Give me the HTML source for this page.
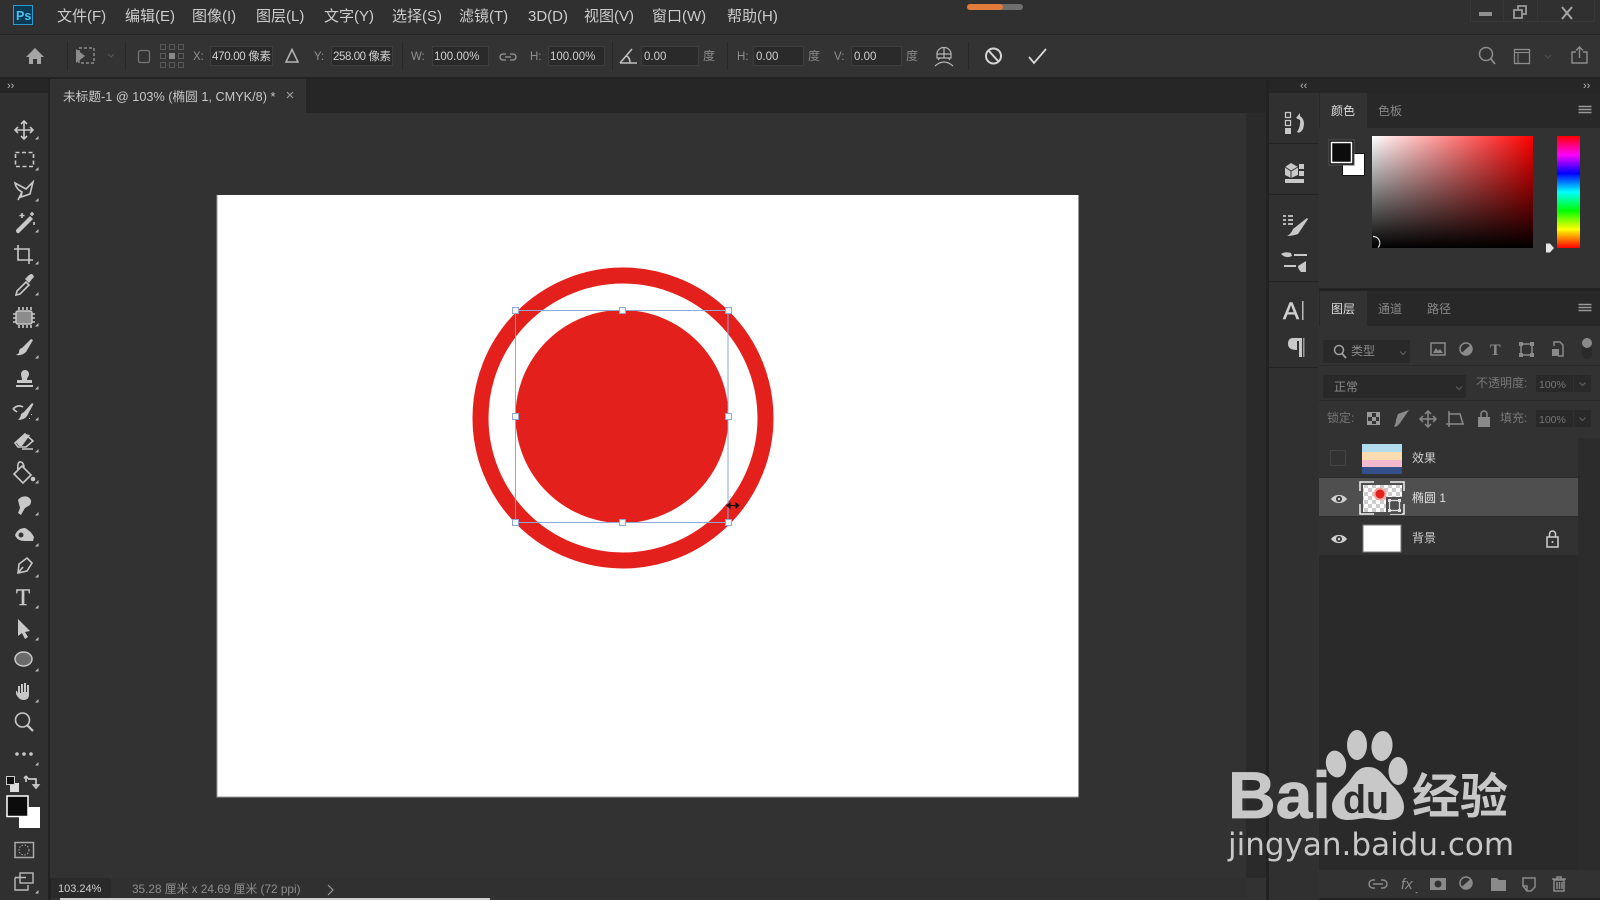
<!DOCTYPE html>
<html lang="zh"><head><meta charset="utf-8"><title>Photoshop</title>
<style>
html,body{margin:0;padding:0;width:1600px;height:900px;overflow:hidden;background:#333}
svg{display:block;filter:blur(.35px)}
text{font-family:"Liberation Sans","Noto Sans CJK SC",sans-serif}
.m{font-size:15px;fill:#cdcdcd}
.o{font-size:11.5px;fill:#8f8f8f}
.f{font-size:11.5px;fill:#d0d0d0}
.p{font-size:12px;fill:#cfcfcf}
.q{font-size:12px;fill:#8a8a8a}
.d{font-size:12px;fill:#777}
.ic{fill:none;stroke:#c8c8c8;stroke-width:1.6}
.fi{fill:#c8c8c8}
.dm{fill:#8a8a8a}
.dl{fill:none;stroke:#8a8a8a;stroke-width:1.5}
</style></head><body>
<svg width="1600" height="900" viewBox="0 0 1600 900" xmlns="http://www.w3.org/2000/svg">
<defs>
<linearGradient id="g1" x1="0" x2="1" y1="0" y2="0"><stop offset="0" stop-color="#fff"/><stop offset="1" stop-color="#f00"/></linearGradient>
<linearGradient id="g2" x1="0" x2="0" y1="0" y2="1"><stop offset="0" stop-color="#000" stop-opacity="0"/><stop offset="1" stop-color="#000"/></linearGradient>
<linearGradient id="hue" x1="0" x2="0" y1="0" y2="1"><stop offset="0" stop-color="#f00"/><stop offset=".167" stop-color="#f0f"/><stop offset=".333" stop-color="#00f"/><stop offset=".5" stop-color="#0ff"/><stop offset=".667" stop-color="#0f0"/><stop offset=".833" stop-color="#ff0"/><stop offset="1" stop-color="#f00"/></linearGradient>
<pattern id="chk" width="8" height="8" patternUnits="userSpaceOnUse"><rect width="8" height="8" fill="#fff"/><rect width="4" height="4" fill="#ccc"/><rect x="4" y="4" width="4" height="4" fill="#ccc"/></pattern>
<path id="tri" d="M0 3.5L3.5 0V3.5Z" fill="#bbb"/>
<g id="eye"><path d="M-8 0C-4-5.500 4-5.500 8 0C4 5.500-4 5.500-8 0Z" fill="#d0d0d0"/><circle r="3" fill="#333"/><circle r="1.300" fill="#d0d0d0"/></g>
<g id="chev"><path d="M-3-1.500L0 1.500L3-1.500" fill="none" stroke="#5c5c5c" stroke-width="1.200"/></g>
</defs>

<!-- base -->
<rect width="1600" height="900" fill="#323232"/>
<!-- title bar -->
<rect width="1600" height="34" fill="#303030"/>
<rect y="34" width="1600" height="1" fill="#262626"/>
<rect y="35" width="1600" height="43" fill="#333"/>
<rect y="77" width="1600" height="2" fill="#232323"/>
<!-- Ps logo -->
<rect x="13.500" y="5.500" width="19" height="19" fill="#0b3a55" stroke="#2a9bd4"/>
<text x="16" y="20" style="font-size:12.500px;font-weight:bold;fill:#4dc0f0">Ps</text>
<!-- menu -->
<text class="m" x="57" y="21">文件(F)</text>
<text class="m" x="125" y="21">编辑(E)</text>
<text class="m" x="192" y="21">图像(I)</text>
<text class="m" x="256" y="21">图层(L)</text>
<text class="m" x="324" y="21">文字(Y)</text>
<text class="m" x="392" y="21">选择(S)</text>
<text class="m" x="459" y="21">滤镜(T)</text>
<text class="m" x="528" y="21">3D(D)</text>
<text class="m" x="584" y="21">视图(V)</text>
<text class="m" x="652" y="21">窗口(W)</text>
<text class="m" x="727" y="21">帮助(H)</text>
<!-- progress -->
<rect x="967" y="4" width="56" height="6" rx="3" fill="#6f6f6f"/>
<rect x="967" y="4" width="36" height="6" rx="3" fill="#e07b39"/>
<!-- win controls -->
<path d="M1470.500 0V21.500H1594.500V0M1503.500 0V21M1537.500 0V21" fill="none" stroke="#383838"/>
<rect x="1479" y="12" width="13" height="4" fill="#8f8f8f"/>
<path d="M1514 10h8v8h-8zM1518 10V6h8v8h-4" fill="none" stroke="#9a9a9a" stroke-width="1.800"/>
<path d="M1562 7L1572 19M1572 7L1562 19" fill="none" stroke="#a5a5a5" stroke-width="2"/>

<!-- options bar -->
<path d="M35 48L26 57H29V64H33V59H37V64H41V57H44Z" fill="#a5a5a5"/>
<path d="M67.500 42V70M125.500 42V70M402.500 42V70M612.500 42V70M727.500 42V70M968.500 42V70" stroke="#282828" fill="none"/>
<rect x="79" y="48" width="15" height="15" fill="none" stroke="#8c8c8c" stroke-dasharray="3 2" stroke-width="1.500"/>
<path d="M76 49L85 56L76 63Z" fill="#8c8c8c"/>
<path d="M108 54l3 3l3-3" fill="none" stroke="#555" stroke-width="1.200"/>
<rect x="138.500" y="50.500" width="11" height="12" rx="2" fill="none" stroke="#777" stroke-width="1.300"/>
<g fill="none" stroke="#5a5a5a"><rect x="160.500" y="44.500" width="5" height="5"/><rect x="169.500" y="44.500" width="5" height="5"/><rect x="178.500" y="44.500" width="5" height="5"/><rect x="160.500" y="53.500" width="5" height="5"/><rect x="178.500" y="53.500" width="5" height="5"/><rect x="160.500" y="62.500" width="5" height="5"/><rect x="169.500" y="62.500" width="5" height="5"/><rect x="178.500" y="62.500" width="5" height="5"/></g>
<rect x="169" y="53" width="6" height="6" fill="#8a8a8a"/>
<g fill="#2a2a2a" stroke="#3f3f3f">
<rect x="210.500" y="46.500" width="62" height="19"/>
<rect x="331.500" y="46.500" width="61" height="19"/>
<rect x="432.500" y="46.500" width="56" height="19"/>
<rect x="548.500" y="46.500" width="56" height="19"/>
<rect x="641.500" y="46.500" width="57" height="19"/>
<rect x="753.500" y="46.500" width="50" height="19"/>
<rect x="851.500" y="46.500" width="50" height="19"/>
</g>
<text class="o" x="193" y="60">X:</text><text class="f" x="212" y="60" textLength="59">470.00 像素</text>
<path d="M292 49.500L298 62H286Z" fill="none" stroke="#b5b5b5" stroke-width="1.500"/>
<text class="o" x="314" y="60">Y:</text><text class="f" x="333" y="60" textLength="58">258.00 像素</text>
<text class="o" x="411" y="60">W:</text><text class="f" x="434" y="60">100.00%</text>
<path d="M506 54h-3a3 3 0 0 0 0 6h3M510 54h3a3 3 0 0 1 0 6h-3M505 57h6" fill="none" stroke="#999" stroke-width="1.300"/>
<text class="o" x="530" y="60">H:</text><text class="f" x="550" y="60">100.00%</text>
<path d="M620 63H637M620 63L632 49M630 63Q630 57 626 56" fill="none" stroke="#c0c0c0" stroke-width="1.600"/>
<text class="f" x="644" y="60">0.00</text><text class="q" x="703" y="60">度</text>
<text class="o" x="737" y="60">H:</text><text class="f" x="756" y="60">0.00</text><text class="q" x="808" y="60">度</text>
<text class="o" x="834" y="60">V:</text><text class="f" x="854" y="60">0.00</text><text class="q" x="906" y="60">度</text>
<path d="M937 54A7 6.500 0 0 1 951 54V58H937ZM937 54H951M944 47.500V58M940 58L938 60M948 58L950 60M935 66Q944 58 953 66" fill="none" stroke="#b5b5b5" stroke-width="1.200"/>
<circle cx="993.500" cy="56" r="7.500" fill="none" stroke="#d5d5d5" stroke-width="2"/>
<path d="M988.500 50.500L998.500 61.500" stroke="#d5d5d5" stroke-width="2"/>
<path d="M1029 57L1034 63L1046 49" fill="none" stroke="#d8d8d8" stroke-width="1.800"/>
<circle cx="1486" cy="54" r="6.500" fill="none" stroke="#8d8d8d" stroke-width="1.500"/>
<path d="M1491 59L1495 64" stroke="#8d8d8d" stroke-width="1.800"/>
<rect x="1514.500" y="49.500" width="15" height="14" fill="none" stroke="#8d8d8d" stroke-width="1.300"/>
<path d="M1515 52.500H1529M1518 53V63" stroke="#8d8d8d"/>
<path d="M1545 55l3 3l3-3" fill="none" stroke="#4d4d4d" stroke-width="1.200"/>
<path d="M1576 52H1572V63H1587V52H1583M1579.500 58V47M1576 50.500L1579.500 47L1583 50.500" fill="none" stroke="#8d8d8d" stroke-width="1.400"/>

<!-- left toolbar -->
<rect x="0" y="79" width="48" height="821" fill="#303030"/>
<rect x="0" y="79" width="48" height="14" fill="#262626"/>
<rect x="48" y="79" width="3" height="821" fill="#222"/>
<text x="7" y="89" style="font-size:11px;fill:#bbb">&#8250;&#8250;</text>
<!-- tab bar -->
<rect x="50" y="79" width="1196" height="34" fill="#262626"/>
<rect x="50" y="79" width="256" height="35" fill="#323232"/>
<text x="63" y="101" style="font-size:12.700px;fill:#c8c8c8">未标题-1 @ 103% (椭圆 1, CMYK/8) *</text>
<path d="M287 92L293 98M293 92L287 98" stroke="#999" stroke-width="1.200"/>
<!-- right strip -->
<rect x="1246" y="113" width="20" height="765" fill="#2a2a2a"/>
<rect x="1246" y="79" width="20" height="34" fill="#262626"/>
<rect x="1265" y="79" width="335" height="14" fill="#262626"/>
<text x="1300" y="89" style="font-size:11px;fill:#bbb">&#8249;&#8249;</text>
<text x="1583" y="89" style="font-size:11px;fill:#bbb">&#8250;&#8250;</text>

<!-- canvas -->
<rect x="50" y="114" width="1196" height="764" fill="#323232"/>
<rect x="217" y="195" width="861.500" height="602" fill="#fff"/>
<path d="M217 195V797H1078.500" fill="none" stroke="#9a9a9a"/>
<circle cx="623" cy="418" r="142.500" fill="none" stroke="#e4201c" stroke-width="16"/>
<circle cx="622" cy="416.500" r="106.500" fill="#e4201c"/>
<rect x="515.500" y="310.500" width="212.500" height="212" fill="none" stroke="#8eaad4"/>
<g fill="#f4f6fc" stroke="#8eaad4"><rect x="512.500" y="307.500" width="6" height="6"/><rect x="619.500" y="307.500" width="6" height="6"/><rect x="725.500" y="307.500" width="6" height="6"/><rect x="512.500" y="413.500" width="6" height="6"/><rect x="725.500" y="413.500" width="6" height="6"/><rect x="512.500" y="519.500" width="6" height="6"/><rect x="619.500" y="519.500" width="6" height="6"/><rect x="725.500" y="519.500" width="6" height="6"/></g>
<path d="M727 505.500H739M727 505.500l3-2.500v5zM739 505.500l-3-2.500v5z" fill="#111" stroke="#111"/>

<!-- tool icons -->
<path class="ic" transform="translate(0,2)" d="M24 119V137M15 128H33M21 122L24 119L27 122M21 134L24 137L27 134M18 125L15 128L18 131M30 125L33 128L30 131"/>
<rect class="ic" x="15.500" y="152.500" width="18" height="14" stroke-dasharray="4 2.500"/>
<path class="ic" d="M15 183L26 189L33 182L30 194L21 197L22 192Q16 189 15 183ZM22 192L18 200"/>
<g transform="translate(0,-2)">
<path class="fi" d="M16 232L30 218L33 221L19 235Q16 236 16 232Z"/>
<path class="ic" d="M22 215v5M19.500 217.500h5M32 214v4M30 216h4M34 224v3" stroke-width="1.200"/>
</g>
<path class="ic" d="M18 245V260H31M14 249H29V264M29 260H33" stroke-width="2"/>
<g transform="translate(0,-2)">
<path class="ic" d="M17 293L26 284L29 287L20 296L16 297Z"/>
<path class="fi" d="M25 281L29 277Q32 275 33 277Q35 279 32 281L29 285Z"/>
</g>
<rect x="16" y="311" width="16" height="13" rx="2" fill="#8c8c8c" stroke="#c8c8c8" stroke-width="1.500"/>
<path class="ic" d="M19 307v3M23 307v3M27 307v3M31 307v3M19 325v3M23 325v3M27 325v3M31 325v3M13 314h3M13 318h3M13 322h3M32 314h3M32 318h3M32 322h3" stroke-width="1.200"/>
<path class="fi" d="M22 348L31 339L33 340L26 352Q22 356 16 355Q20 353 19 351Q20 348 22 348Z"/>
<g transform="translate(0,3)">
<path class="fi" d="M21 371a4 4 0 0 1 8 0c0 3-2 3-2 6h5v3H17v-3h5c0-3-1-3-1-6Z"/>
<rect class="fi" x="16" y="382" width="17" height="2"/>
</g>
<path class="fi" d="M24 412L32 403L33.500 404L27 416Q24 420 18 420Q21 417 21 414Z"/>
<path class="ic" d="M13 409Q18 404 23 407M13 409L17 412" stroke-width="1.400"/>
<path class="fi" d="M31 414h1v1h-1zM29 418h1v1h-1z"/>
<g transform="translate(0,-2)">
<path class="fi" d="M25 436L30 437L22 448H19L16 444Z"/>
<path class="ic" d="M25 436L33 443L26 449H18L15 445ZM22 451H33" stroke-width="1.400"/>
</g>
<g transform="translate(0,-4)">
<path class="ic" d="M14 478L22 470L31 479L23 487ZM18 474Q17 465 21 466Q24 467 24 472" stroke-width="1.500"/>
<circle class="fi" cx="33" cy="483" r="2.300"/>
</g>
<path class="fi" transform="translate(0,-2)" d="M18 502Q22 497 28 499Q33 502 30 507L25 510L21 517L18 515L20 510Z"/>
<path class="fi" d="M15 535Q18 528 25 528Q31 531 34 537L33 541H25Q17 541 15 535Z"/>
<circle cx="21" cy="535" r="2.500" fill="#333"/>
<path class="ic" d="M18 573L19 564L27 558L32 563L27 571Z M18 573L23 567"/>
<text x="16" y="605" style="font-family:'Liberation Serif',serif;font-size:23px;fill:#c8c8c8;stroke:#c8c8c8;stroke-width:.4">T</text>
<path class="fi" transform="translate(0,-1)" d="M18 620L30 632L25 633L28 638L25 640L22 634L18 637Z"/>
<ellipse cx="23.500" cy="659" rx="8.500" ry="7" fill="#6a6a6a" stroke="#c8c8c8" stroke-width="1.500"/>
<path class="fi" d="M18 694V686H20V693H21V684H23V692H24V683H26V692H27V685H29V695Q29 700 23 700Q19 700 16 694L16 691Q17 690 18 694Z"/>
<circle class="ic" cx="22.500" cy="720" r="7"/>
<path d="M27 725L33 731" stroke="#c8c8c8" stroke-width="2.200"/>
<g class="fi"><circle cx="17" cy="754" r="1.800"/><circle cx="24" cy="754" r="1.800"/><circle cx="31" cy="754" r="1.800"/></g>
<g>
<use href="#tri" x="35" y="136"/><use href="#tri" x="35" y="167"/><use href="#tri" x="35" y="198"/><use href="#tri" x="35" y="229"/><use href="#tri" x="35" y="261"/><use href="#tri" x="35" y="292"/><use href="#tri" x="35" y="323"/><use href="#tri" x="35" y="355"/><use href="#tri" x="35" y="386"/><use href="#tri" x="35" y="417"/><use href="#tri" x="35" y="449"/><use href="#tri" x="35" y="480"/><use href="#tri" x="35" y="512"/><use href="#tri" x="35" y="543"/><use href="#tri" x="35" y="574"/><use href="#tri" x="35" y="605"/><use href="#tri" x="35" y="637"/><use href="#tri" x="35" y="668"/><use href="#tri" x="35" y="699"/><use href="#tri" x="35" y="762"/><use href="#tri" x="35" y="890"/>
</g>
<rect x="10" y="783" width="9" height="9" fill="#ddd"/>
<rect x="6.500" y="776.500" width="8" height="8" fill="#111" stroke="#ccc"/>
<path d="M29 780H37V787M27 783V777M27 777l-2 2.500M27 777l2 2.500M37 789l-2.500-3h5z" fill="none" stroke="#ccc" stroke-width="1.700" transform="translate(-1,-1)"/>
<rect x="19" y="807" width="21" height="21" fill="#fff"/>
<rect x="7" y="796" width="21" height="20.500" fill="#0c0c0c" stroke="#fff" stroke-width="1.500"/>
<rect x="15" y="842.500" width="18.500" height="15" fill="none" stroke="#aaa" stroke-width="1.500"/>
<circle cx="24" cy="850" r="5" fill="none" stroke="#aaa" stroke-dasharray="1.500 1.500"/>
<g transform="translate(0,3)">
<path d="M15 874.500H26M15 874.500V887H28V882" fill="none" stroke="#bbb" stroke-width="1.400"/>
<rect x="20" y="870" width="13" height="10" fill="none" stroke="#bbb" stroke-width="1.400"/>
</g>

<!-- status bar -->
<rect x="51" y="878" width="1195" height="20" fill="#303030"/>
<rect x="51" y="878" width="60" height="20" fill="#2a2a2a"/>
<text x="58" y="892" style="font-size:11px;fill:#d0d0d0">103.24%</text>
<text x="132" y="893" style="font-size:11.800px;fill:#8e8e8e">35.28 厘米  x 24.69 厘米 (72 ppi)</text>
<path d="M328 885L333 890L328 895" fill="none" stroke="#999" stroke-width="1.200"/>
<rect x="60" y="898" width="430" height="2" fill="#cfcfcf"/>

<!-- dock -->
<rect x="1266" y="79" width="3" height="821" fill="#222"/>
<rect x="1269" y="93" width="49" height="807" fill="#303030"/>
<path d="M1269 143.500H1318M1269 194.500H1318M1269 281.500H1318M1269 367.500H1318" stroke="#242424"/>
<rect x="1285.500" y="112.500" width="5" height="5" fill="none" stroke="#c8c8c8" stroke-width="1.300"/>
<rect x="1285.500" y="120.500" width="5" height="5" fill="none" stroke="#c8c8c8" stroke-width="1.300"/>
<rect class="fi" x="1285" y="128" width="6" height="6"/>
<path d="M1296 118L1300 113V116Q1306 120 1303 129Q1300 134 1297 132Q1301 126 1300 120Z" fill="#c8c8c8"/>
<path class="fi" d="M1291 163L1298 167V175L1291 178L1285 175V167Z"/>
<path d="M1285 167L1291 171L1298 167M1291 171V178" stroke="#333" fill="none"/>
<rect class="fi" x="1299" y="164" width="5" height="5"/><rect class="fi" x="1299" y="171" width="5" height="5"/>
<rect class="fi" x="1285" y="179" width="19" height="4"/>
<path d="M1283 216h3M1283 220h3M1283 224h3M1288 216h5M1288 220h5M1288 224h5" stroke="#c8c8c8" stroke-width="1.800"/>
<path class="fi" d="M1293 229L1307 218L1308 219L1298 234Q1292 236 1287 236Q1291 234 1293 229Z"/>
<path class="fi" d="M1281 254Q1285 251 1291 253L1292 256Q1286 259 1281 254ZM1294 254H1307V256H1294ZM1284 265H1296V267H1284ZM1298 266L1306 261V272L1301 272Q1298 269 1298 266Z"/>
<text x="1283" y="319" style="font-size:24px;fill:#d0d0d0;stroke:#d0d0d0;stroke-width:.5">A</text>
<rect x="1302" y="301" width="1.500" height="19" fill="#bbb"/>
<path class="fi" d="M1293 338H1302V357H1299V341H1297V350Q1288 350 1288 344Q1288 338 1293 338Z"/>
<rect x="1303" y="338" width="1.500" height="19" fill="#999"/>

<!-- color panel -->
<rect x="1319" y="93" width="281" height="197" fill="#323232"/>
<rect x="1319" y="93" width="281" height="35" fill="#282828"/>
<rect x="1320" y="93" width="47" height="35" fill="#323232"/>
<text x="1331" y="115" style="font-size:12px;fill:#ddd">颜色</text>
<text x="1378" y="115" style="font-size:12px;fill:#888">色板</text>
<path d="M1578.500 106.500H1591.500M1578.500 109.500H1591.500M1578.500 112.500H1591.500" stroke="#999" stroke-width="1.500"/>
<rect x="1342.500" y="153.500" width="22" height="22" fill="#fff" stroke="#111"/>
<rect x="1329" y="140" width="25" height="25" fill="#0c0c0c" stroke="#555" stroke-width="1"/>
<rect x="1331.500" y="142.500" width="20" height="20" fill="#0c0c0c" stroke="#fff" stroke-width="1.500"/>
<rect x="1372" y="136" width="161" height="112" fill="url(#g1)"/>
<rect x="1372" y="136" width="161" height="112" fill="url(#g2)"/>
<path d="M1373 236.500A6.500 6.500 0 0 1 1378 247.500" fill="none" stroke="#ddd" stroke-width="1.200"/>
<rect x="1557" y="136" width="23" height="112" fill="url(#hue)"/>
<path d="M1546 243.500H1550L1554 248L1550 252.500H1546Z" fill="#e5e5e5"/>
<rect x="1319" y="288" width="281" height="3" fill="#222"/>

<!-- layers panel -->
<rect x="1319" y="291" width="281" height="609" fill="#2a2a2a"/>
<rect x="1319" y="291" width="281" height="35" fill="#282828"/>
<rect x="1319" y="326" width="281" height="112" fill="#323232"/>
<rect x="1320" y="291" width="47" height="35" fill="#323232"/>
<text x="1331" y="313" style="font-size:12px;fill:#ddd">图层</text>
<text x="1378" y="313" style="font-size:12px;fill:#888">通道</text>
<text x="1427" y="313" style="font-size:12px;fill:#888">路径</text>
<path d="M1578.500 304.500H1591.500M1578.500 307.500H1591.500M1578.500 310.500H1591.500" stroke="#999" stroke-width="1.500"/>
<!-- filter row -->
<rect x="1323" y="340" width="87" height="23" rx="1" fill="#292929"/>
<circle cx="1339" cy="350" r="4.500" fill="none" stroke="#a0a0a0" stroke-width="1.500"/>
<path d="M1342 353.500L1346 358" stroke="#a0a0a0" stroke-width="1.800"/>
<text x="1351" y="355" class="q">类型</text>
<use href="#chev" x="1403" y="353"/>
<rect x="1431" y="343" width="14" height="12" class="dl" stroke-width="1.300"/>
<path class="dm" d="M1433 353L1436 348L1438 351L1440 349L1443 353Z"/>
<circle cx="1466" cy="349" r="6" class="dl"/><path class="dm" d="M1461.500 353L1470.500 345A6 6 0 0 1 1461.500 353Z"/>
<text x="1490" y="355" style="font-family:'Liberation Serif',serif;font-size:16px;font-weight:bold;fill:#8a8a8a">T</text>
<rect x="1521" y="344" width="11" height="11" class="dl" stroke-width="1.200"/>
<g class="dm"><rect x="1519" y="342" width="4" height="4"/><rect x="1530" y="342" width="4" height="4"/><rect x="1519" y="353" width="4" height="4"/><rect x="1530" y="353" width="4" height="4"/></g>
<path class="dl" d="M1554 346V342H1560L1563 345V356H1558" stroke-width="1.300"/>
<rect class="dm" x="1552" y="349" width="7" height="7"/>
<rect x="1582" y="343" width="10" height="16" rx="5" fill="#2a2a2a"/>
<circle cx="1587" cy="343" r="5" fill="#8a8a8a"/>
<rect x="1319" y="365" width="281" height="1" fill="#2a2a2a"/>
<!-- blend row -->
<rect x="1323" y="375" width="143" height="23" rx="1" fill="#292929"/>
<text x="1334" y="391" class="q">正常</text>
<use href="#chev" x="1459" y="388"/>
<text x="1476" y="387" class="d">不透明度:</text>
<rect x="1536" y="375" width="37" height="17" fill="#292929"/>
<rect x="1574" y="375" width="17" height="17" fill="#292929"/>
<text x="1539" y="388" style="font-size:10.500px;fill:#777">100%</text>
<use href="#chev" x="1582.500" y="384"/>
<rect x="1319" y="400" width="281" height="1" fill="#2a2a2a"/>
<!-- lock row -->
<text x="1327" y="422" class="d">锁定:</text>
<rect x="1367.500" y="412.500" width="12" height="12" fill="none" stroke="#9a9a9a"/>
<path d="M1368 413h4v4h-4zM1376 413h3v4h-3zM1372 417h4v4h-4zM1368 421h4v3h-4zM1376 421h3v3h-3z" fill="#9a9a9a"/>
<path class="dm" d="M1398 414L1409 410L1400 423Q1397 427 1394 427Q1396 423 1396 420Z"/>
<path class="dl" d="M1428 411V427M1420 419H1436M1425 414L1428 411L1431 414M1425 424L1428 427L1431 424M1423 416L1420 419L1423 422M1433 416L1436 419L1433 422" stroke-width="1.300"/>
<path class="dl" d="M1449 414H1460L1463 424H1449ZM1446 424H1464M1449 411V427" stroke-width="1.200"/>
<rect class="dm" x="1478" y="417" width="12" height="10"/>
<path class="dl" d="M1481 417V414A3 3 0 0 1 1487 414V417"/>
<text x="1500" y="422" class="d">填充:</text>
<rect x="1536" y="410" width="37" height="17" fill="#292929"/>
<rect x="1574" y="410" width="17" height="17" fill="#292929"/>
<text x="1539" y="423" style="font-size:10.500px;fill:#777">100%</text>
<use href="#chev" x="1582.500" y="419"/>
<!-- layer rows -->
<rect x="1319" y="438" width="259" height="40" fill="#323232"/>
<rect x="1319" y="478" width="259" height="39" fill="#4f4f4f"/>
<rect x="1319" y="517" width="259" height="39" fill="#323232"/>
<path d="M1319 477.500H1578M1319 516.500H1578M1319 555.500H1578" stroke="#2b2b2b"/>
<rect x="1578" y="438" width="22" height="432" fill="#2c2c2c"/>
<rect x="1330.500" y="450.500" width="15" height="15" fill="none" stroke="#454545"/>
<rect x="1362" y="444" width="40" height="8" fill="#b0dcee"/>
<rect x="1362" y="452" width="40" height="8" fill="#fbdcb0"/>
<rect x="1362" y="460" width="40" height="7" fill="#f3b9cc"/>
<rect x="1362" y="467" width="40" height="7" fill="#33508c"/>
<text x="1412" y="462" class="p">效果</text>
<use href="#eye" x="1339" y="499"/>
<rect x="1363" y="485" width="39" height="27" fill="url(#chk)"/>
<circle cx="1380" cy="494" r="6.500" fill="#f4a5a0"/><circle cx="1380" cy="494" r="4.500" fill="#e4201c"/>
<path d="M1360 491V482H1374M1390 482H1404V491M1360 504V514H1374M1390 514H1404V504" fill="none" stroke="#f2f2f2" stroke-width="1.500"/>
<rect x="1386" y="497" width="16" height="17" fill="#4f4f4f"/>
<rect x="1389.500" y="500.500" width="10" height="10" fill="none" stroke="#ddd" stroke-width="1.300"/>
<g fill="#ddd"><rect x="1388" y="499" width="3" height="3"/><rect x="1398" y="499" width="3" height="3"/><rect x="1388" y="509" width="3" height="3"/><rect x="1398" y="509" width="3" height="3"/></g>
<text x="1412" y="502" class="p" style="fill:#e0e0e0">椭圆 1</text>
<use href="#eye" x="1339" y="539"/>
<rect x="1363" y="525" width="38" height="27" fill="#fff" stroke="#777"/>
<text x="1412" y="542" class="p">背景</text>
<rect x="1547" y="537" width="11" height="10" fill="none" stroke="#d0d0d0" stroke-width="1.500"/>
<path d="M1549.500 537V534A3 3 0 0 1 1555.500 534V537" fill="none" stroke="#d0d0d0" stroke-width="1.500"/>
<circle cx="1552.500" cy="542" r="1" fill="#d0d0d0"/>
<!-- footer -->
<rect x="1319" y="870" width="281" height="28" fill="#323232"/>
<rect x="1319" y="898" width="281" height="2" fill="#222"/>
<path class="dl" d="M1375 880H1373A4 4 0 0 0 1373 888H1375M1381 880H1383A4 4 0 0 1 1383 888H1381M1373 884H1383"/>
<text x="1401" y="889" style="font-size:15px;font-style:italic;fill:#8a8a8a">fx</text>
<path class="dm" d="M1415 892h3l-1.500 1.500z"/>
<rect class="dm" x="1430" y="878" width="16" height="12"/><circle cx="1438" cy="884" r="3.500" fill="#323232"/>
<circle cx="1466" cy="883" r="6" class="dl"/><path class="dm" d="M1461.500 887L1470.500 879A6 6 0 0 1 1461.500 887Z"/>
<path class="dm" d="M1491 878H1497L1499 880H1506V891H1491Z"/>
<path class="dl" d="M1523 878H1535V887L1531 891H1527V886H1523V878ZM1527 891L1523 886" />
<rect class="dl" x="1554" y="880" width="10" height="11"/>
<path class="dl" d="M1552 879H1566M1557 879V877H1561V879M1557 882V889M1559.500 882V889M1562 882V889" stroke-width="1.100"/>

<!-- watermark -->
<g fill="#c8c8c8">
<text x="1228" y="818" style="font-size:66px;font-weight:bold;stroke:#c8c8c8;stroke-width:.8">Bai</text>
<ellipse cx="1336" cy="764" rx="10" ry="13.500" transform="rotate(-12 1336 764)"/>
<ellipse cx="1357" cy="745" rx="10" ry="15"/>
<ellipse cx="1382" cy="746" rx="10.500" ry="15" transform="rotate(6 1382 746)"/>
<ellipse cx="1398" cy="771" rx="9.500" ry="14"/>
<path d="M1368 767C1380 767 1384 776 1392 785C1400 793 1404 800 1404 807C1404 817 1396 820 1386 820C1378 820 1374 818 1367 818C1360 818 1356 820 1348 820C1338 820 1332 815 1332 806C1332 798 1339 792 1346 785C1353 778 1356 767 1368 767Z"/>
<text x="1343" y="813" style="font-size:40px;font-weight:bold;fill:#2c2c2c" textLength="46" lengthAdjust="spacingAndGlyphs">du</text>
<text x="1412" y="813" style="font-family:'Noto Sans CJK SC',sans-serif;font-size:48px;font-weight:bold">经验</text>
<text x="1228" y="855" style="font-family:'DejaVu Sans',sans-serif;font-size:31px">jingyan.baidu.com</text>
</g>
</svg>
</body></html>
